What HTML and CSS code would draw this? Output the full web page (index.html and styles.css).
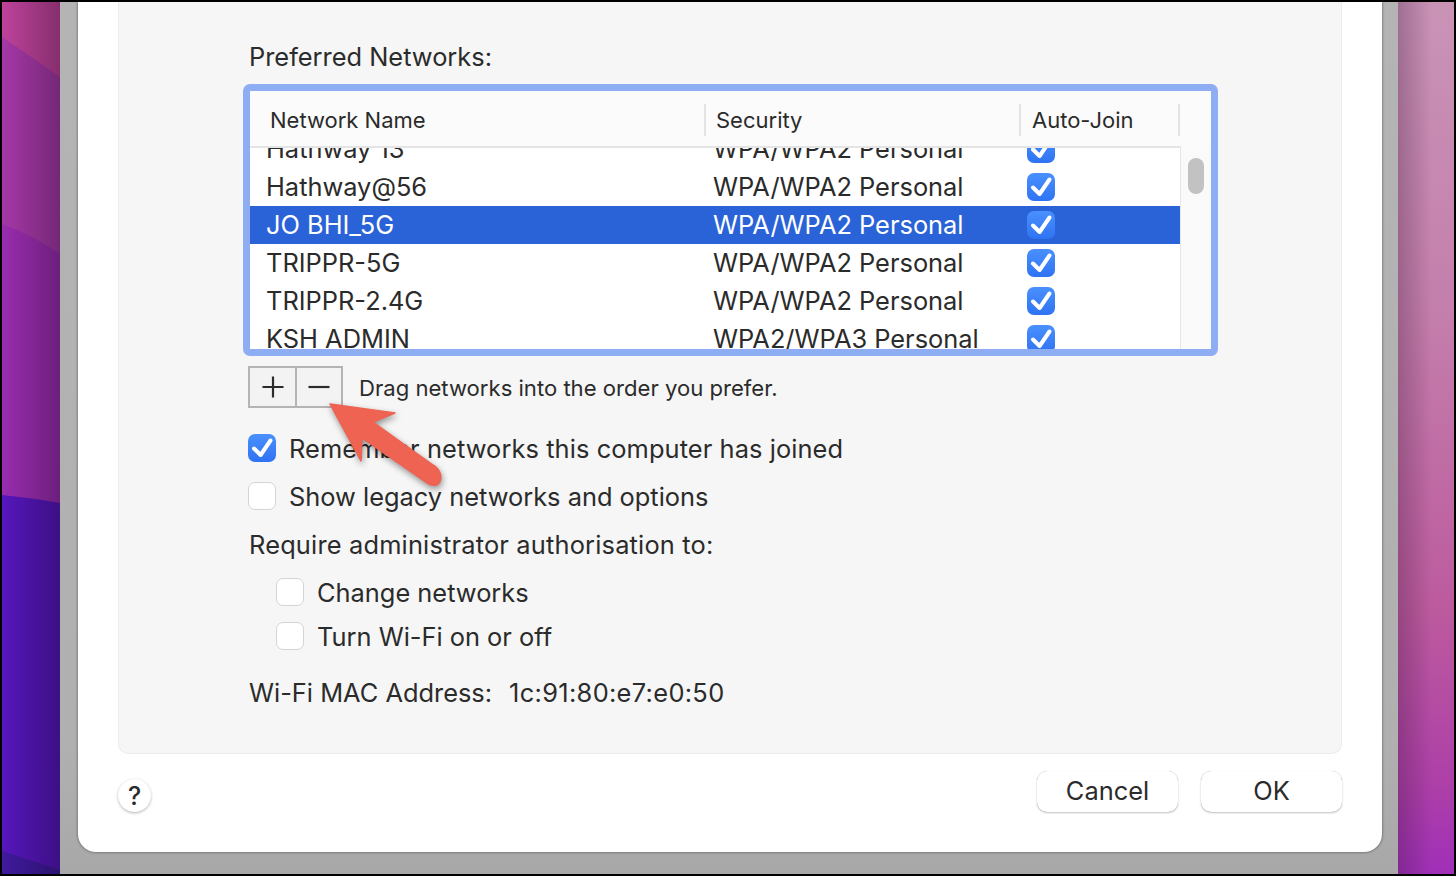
FILE: index.html
```html
<!DOCTYPE html>
<html lang="en">
<head>
<meta charset="utf-8">
<title>Wi-Fi Preferred Networks</title>
<link rel="stylesheet" href="styles.css">
</head>
<body>
<svg class="defs" width="0" height="0" aria-hidden="true">
  <symbol id="tick" viewBox="0 0 28 28"><path d="M6 14.5 L12.6 21 L22.5 6.5" fill="none" stroke="#fff" stroke-width="4" stroke-linecap="round" stroke-linejoin="round"/></symbol>
</svg>
<div class="screen">
  <svg class="wall-left" viewBox="0 0 58 872" preserveAspectRatio="none" aria-hidden="true">
    <defs>
      <linearGradient id="dim" x1="0" x2="1" y1="0" y2="0">
        <stop offset="0" stop-color="#000" stop-opacity="0"/>
        <stop offset="1" stop-color="#000" stop-opacity=".3"/>
      </linearGradient>
    </defs>
    <rect width="58" height="872" fill="#5616bc"/>
    <path d="M0 0H58V501Q30 496 0 493Z" fill="#9a2cb0"/>
    <path d="M0 0H58V252Q30 233 0 222Z" fill="#a638a8"/>
    <path d="M0 0H58V75Q25 52 0 35Z" fill="#bf429c"/>
    <path d="M0 849L58 868V872H0Z" fill="#3f1a9e"/>
    <rect width="58" height="872" fill="url(#dim)"/>
  </svg>
  <div class="scrim">
    <main class="sheet">
      <section class="panel">
        <h2 class="line title">Preferred Networks:</h2>
        <div class="list">
          <div class="head">
            <div class="hcell hname">Network Name</div>
            <div class="hcell hsec">Security</div>
            <div class="hcell hjoin">Auto-Join</div>
          </div>
          <div class="body">
            <div class="rows">
              <div class="row"><span class="name">Hathway 13</span><span class="sec">WPA/WPA2 Personal</span><span class="box on"><svg class="tick"><use href="#tick"/></svg></span></div>
              <div class="row"><span class="name">Hathway@56</span><span class="sec">WPA/WPA2 Personal</span><span class="box on"><svg class="tick"><use href="#tick"/></svg></span></div>
              <div class="row selected"><span class="name">JO BHI_5G</span><span class="sec">WPA/WPA2 Personal</span><span class="box on"><svg class="tick"><use href="#tick"/></svg></span></div>
              <div class="row"><span class="name">TRIPPR-5G</span><span class="sec">WPA/WPA2 Personal</span><span class="box on"><svg class="tick"><use href="#tick"/></svg></span></div>
              <div class="row"><span class="name">TRIPPR-2.4G</span><span class="sec">WPA/WPA2 Personal</span><span class="box on"><svg class="tick"><use href="#tick"/></svg></span></div>
              <div class="row"><span class="name">KSH ADMIN</span><span class="sec">WPA2/WPA3 Personal</span><span class="box on"><svg class="tick"><use href="#tick"/></svg></span></div>
            </div>
            <div class="track"><div class="thumb"></div></div>
          </div>
        </div>
        <div class="tools">
          <div class="seg">
            <button class="segbtn" aria-label="Add"><svg class="segicon" viewBox="0 0 24 24"><path d="M12 1.5V22.5M1.5 12H22.5" stroke="#2b2b2b" stroke-width="2.2" fill="none"/></svg></button>
            <button class="segbtn" aria-label="Remove"><svg class="segicon" viewBox="0 0 24 24"><path d="M1.5 12H22.5" stroke="#2b2b2b" stroke-width="2.2" fill="none"/></svg></button>
          </div>
          <span class="hint">Drag networks into the order you prefer.</span>
        </div>
        <label class="line check remember"><span class="box on"><svg class="tick"><use href="#tick"/></svg></span>Remember networks this computer has joined</label>
        <label class="line check"><span class="box"></span>Show legacy networks and options</label>
        <div class="line plain require">Require administrator authorisation to:</div>
        <label class="line check nested"><span class="box"></span>Change networks</label>
        <label class="line check nested tight"><span class="box"></span>Turn Wi-Fi on or off</label>
        <div class="line plain mac"><span>Wi-Fi MAC Address:</span><span class="macval">1c:91:80:e7:e0:50</span></div>
      </section>
      <footer class="foot">
        <button class="help">?</button>
        <div class="actions">
          <button class="btn">Cancel</button>
          <button class="btn">OK</button>
        </div>
      </footer>
      <svg class="arrow" viewBox="0 0 140 110" aria-hidden="true">
        <path d="M10 8 L75 17 L53 26 L113 69 C126 76 122 96 107 87 L42 42 L41 65 Z" fill="#ee6352" stroke="#ee6352" stroke-width="1.5" stroke-linejoin="round"/>
      </svg>
    </main>
  </div>
  <div class="wall-right"></div>
</div>
</body>
</html>
```
FILE: styles.css
```css
* { box-sizing: border-box; }
html, body { margin: 0; padding: 0; }
body {
  width: 1456px; height: 876px; overflow: hidden; background: #000;
  font-family: Inter, "Liberation Sans", sans-serif; color: #2b2b2b;
}
.defs { position: absolute; }
.screen {
  width: 1456px; height: 876px; padding: 2px;
  display: grid; grid-template-columns: 58px 1338px 56px;
  background: #000;
}
.wall-left { width: 58px; height: 872px; display: block; }
.wall-right {
  background:
    linear-gradient(90deg, rgba(50,20,50,.28), rgba(50,20,50,0) 60%),
    linear-gradient(180deg, #c993b6 0, #c47fac 35%, #bc5a9e 70%, #ad3fa8 90%, #a02fb8 100%);
}
.scrim {
  height: 872px; padding: 0 16px 22px 18px; overflow: hidden;
  background: linear-gradient(180deg, #b4b4b4 0, #b0b0b0 85%, #a8a8a8 100%);
}
.sheet {
  position: relative; width: 1304px; height: 850px;
  background: #fff; border-radius: 0 0 18px 18px;
  padding: 0 40px;
  box-shadow: 0 0 3px rgba(0,0,0,.55);
  display: flex; flex-direction: column;
}
.panel {
  height: 752px; padding: 39px 0 0 129px;
  background: #f6f6f6; border: 1px solid #ececec; border-top: 0;
  border-radius: 0 0 10px 10px;
}
.line { display: flex; align-items: center; height: 48px; margin: 0; font-size: 25.4px; font-weight: 400; white-space: nowrap; }
.plain, .title { padding-left: 1px; }
.title { height: 30px; margin-bottom: 13px; }
.remember { letter-spacing: .09px; }
.require { letter-spacing: .18px; }
.macval { letter-spacing: .33px; }
.list {
  width: 975px; height: 272px; margin-left: -5px;
  border: 7px solid #8fadf2; border-radius: 7px; background: #fff; overflow: hidden;
}
.head { height: 55px; display: flex; background: #fbfbfb; align-items: center; }
.hcell { font-size: 22px; height: 32px; line-height: 32px; margin-top: 2px; border-right: 2px solid #e4e4e4; padding-left: 10px; }
.hname { width: 456px; padding-left: 20px; }
.hsec { width: 315px; }
.hjoin { width: 159px; padding-left: 11px; }
.body { height: 203px; display: flex; overflow: hidden; }
.rows { width: 930px; height: 203px; overflow: hidden; border-top: 2px solid #e4e4e4; }
.row {
  height: 38px; display: flex; align-items: center; font-size: 25.4px; white-space: nowrap;
}
.row:first-child { margin-top: -18px; }
.selected { background: #2a62d8; color: #fff; }
.name { width: 463px; padding: 0 0 2px 16px; flex: none; }
.sec { width: 314px; padding-bottom: 2px; flex: none; }
.box {
  width: 28px; height: 28px; border-radius: 7px; flex: none; display: block;
  background: #fff; border: 1px solid #d4d4d4;
}
.box.on { background: linear-gradient(180deg, #4a90fd, #2f73f3); border: 0; }
.tick { width: 28px; height: 28px; display: block; }
.track { width: 31px; background: #fafafa; border-left: 1px solid #e6e6e6; padding: 12px 0 0 7px; }
.thumb { width: 16px; height: 36px; border-radius: 8px; background: #c2c2c2; }
.tools { display: flex; align-items: center; height: 42px; margin: 10px 0 16px; }
.seg { display: flex; width: 95px; height: 42px; border: 2px solid #b4b4b4; background: #f3f3f3; }
.segbtn { width: 45px; padding: 0; border: 0; background: none; display: flex; align-items: center; justify-content: center; }
.segbtn + .segbtn { border-left: 2px solid #b4b4b4; width: 46px; }
.segicon { width: 24px; height: 24px; }
.hint { font-size: 22.1px; margin: 2px 0 0 16px; white-space: nowrap; }
.check { gap: 13px; }
.nested { padding-left: 28px; }
.tight { height: 40px; }
.mac { height: 72px; gap: 17px; }
.foot { flex: 1; display: flex; align-items: flex-start; justify-content: space-between; }
.help {
  width: 33px; height: 33px; margin-top: 25px; border-radius: 50%; padding: 0;
  border: 0; background: #fff; font: 500 25px Inter, sans-serif; color: #2b2b2b;
  box-shadow: 0 1px 3px rgba(0,0,0,.3);
}
.actions { display: flex; gap: 23px; margin-top: 17px; }
.btn {
  width: 141px; height: 41px; padding: 0 0 3px; border: 0; border-radius: 10px;
  background: #fff; font: 400 25.4px Inter, sans-serif; color: #2b2b2b;
  box-shadow: 0 0 .5px rgba(0,0,0,.35), 0 1px 2px rgba(0,0,0,.25);
}
.arrow {
  position: absolute; left: 242px; top: 394px; width: 140px; height: 110px;
  filter: drop-shadow(1px 3px 3px rgba(0,0,0,.4));
}
```
